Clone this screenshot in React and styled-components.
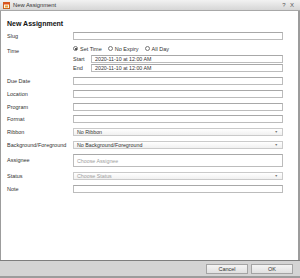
import React from "react"
import styled, { createGlobalStyle } from "styled-components"

const GlobalStyle = createGlobalStyle`
  html, body {
    margin: 0;
    padding: 0;
    width: 300px;
    height: 278px;
    overflow: hidden;
    background: #ffffff;
    font-family: "Liberation Sans", Arial, sans-serif;
  }
`

const Window = styled.div`
  width: 300px;
  height: 278px;
  box-sizing: border-box;
  display: flex;
  flex-direction: column;
  background: #9c9c9c;
  padding: 0 2px 2px 1px;
`

const TitleBar = styled.div`
  height: 10px;
  margin: 0 -2px 0 -1px;
  display: flex;
  align-items: center;
  padding: 0 4px 0 3px;
  background: linear-gradient(#f2f2f2, #d6d6d6);
  border-bottom: 1px solid #a8a8a8;
  font-size: 5.8px;
  color: #333;
`

const TitleText = styled.span`
  margin-left: 3px;
  flex: 1;
`

const TitleButton = styled.span`
  width: 8px;
  text-align: center;
  font-size: 6px;
  color: #555;
`

const Body = styled.div`
  flex: 1;
  background: #ffffff;
  padding: 8px 15px 0 6px;
  display: flex;
  flex-direction: column;
`

const Heading = styled.div`
  font-size: 7px;
  font-weight: bold;
  color: #111;
  height: 10px;
  line-height: 10px;
  margin-bottom: 3px;
`

const Form = styled.div`
  display: grid;
  grid-template-columns: 66px 1fr;
  row-gap: 4.9px;
  align-items: center;
`

const Label = styled.div`
  font-size: 5.5px;
  color: #333;
  align-self: ${(p) => (p.top ? "start" : "center")};
  padding-top: ${(p) => (p.top ? "3px" : "0")};
`

const Input = styled.div`
  height: ${(p) => p.h || 8}px;
  box-sizing: border-box;
  border: 1px solid #bcbcbc;
  border-top-color: #a8a8a8;
  background: #fff;
  font-size: 5.3px;
  color: ${(p) => (p.muted ? "#a0a0a0" : "#333")};
  padding: 0 3px;
  display: flex;
  align-items: center;
  flex: 1;
`

const Select = styled(Input)`
  background: linear-gradient(#ffffff, #f0f0f0);
  justify-content: space-between;
  border-color: #cacaca;
`

const Arrow = styled.span`
  font-size: 3.5px;
  color: #777;
  margin-right: 1px;
`

const TimeBlock = styled.div`
  display: flex;
  flex-direction: column;
  gap: 1px;
`

const RadioRow = styled.div`
  display: flex;
  align-items: center;
  gap: 6px;
  height: 8px;
  margin-bottom: 1px;
`

const RadioOption = styled.label`
  display: flex;
  align-items: center;
  gap: 2px;
  font-size: 5.5px;
  color: #333;
`

const RadioDot = styled.span`
  width: 5px;
  height: 5px;
  box-sizing: border-box;
  border-radius: 50%;
  border: 1px solid #777;
  background: #fff;
  display: flex;
  align-items: center;
  justify-content: center;

  &::after {
    content: "";
    width: 2px;
    height: 2px;
    border-radius: 50%;
    background: ${(p) => (p.checked ? "#222" : "transparent")};
  }
`

const SubRow = styled.div`
  display: flex;
  align-items: center;
`

const SubLabel = styled.span`
  width: 18px;
  font-size: 5.5px;
  color: #333;
`

const Footer = styled.div`
  height: 15px;
  margin-left: -1px;
  margin-right: -2px;
  padding: 0 7px 0 0;
  background: #d4d4d4;
  border-top: 1px solid #7e7e7e;
  display: flex;
  justify-content: flex-end;
  align-items: center;
  gap: 3px;
`

const Button = styled.div`
  width: 42px;
  height: 10px;
  box-sizing: border-box;
  border: 1px solid #a4a4a4;
  background: linear-gradient(#f4f4f4, #e0e0e0);
  font-size: 5.5px;
  color: #333;
  display: flex;
  align-items: center;
  justify-content: center;
`

const AppIcon = () => (
  <svg width="7" height="7" viewBox="0 0 7 7">
    <rect x="0.5" y="0.5" width="6" height="6" fill="#fff7e6" stroke="#c8641e" />
    <rect x="0.5" y="0.5" width="6" height="2" fill="#e0501e" />
    <rect x="2" y="3.5" width="3" height="2" fill="#e8a23a" />
  </svg>
)

const SelectField = ({ children, muted }) => (
  <Select muted={muted}>
    <span>{children}</span>
    <Arrow>▼</Arrow>
  </Select>
)

export default function App() {
  return (
    <>
      <GlobalStyle />
      <Window>
        <TitleBar>
          <AppIcon />
          <TitleText>New Assignment</TitleText>
          <TitleButton>?</TitleButton>
          <TitleButton>X</TitleButton>
        </TitleBar>
        <Body>
          <Heading>New Assignment</Heading>
          <Form>
            <Label>Slug</Label>
            <Input />

            <Label top>Time</Label>
            <TimeBlock>
              <RadioRow>
                <RadioOption><RadioDot checked />Set Time</RadioOption>
                <RadioOption><RadioDot />No Expiry</RadioOption>
                <RadioOption><RadioDot />All Day</RadioOption>
              </RadioRow>
              <SubRow>
                <SubLabel>Start</SubLabel>
                <Input>2020-11-10 at 12:00 AM</Input>
              </SubRow>
              <SubRow>
                <SubLabel>End</SubLabel>
                <Input>2020-11-10 at 12:00 AM</Input>
              </SubRow>
            </TimeBlock>

            <Label>Due Date</Label>
            <Input />
            <Label>Location</Label>
            <Input />
            <Label>Program</Label>
            <Input />
            <Label>Format</Label>
            <Input />
            <Label>Ribbon</Label>
            <SelectField>No Ribbon</SelectField>
            <Label>Background/Foreground</Label>
            <SelectField>No Background/Foreground</SelectField>
            <Label top>Assignee</Label>
            <Input h={13} muted>Choose Assignee</Input>
            <Label>Status</Label>
            <SelectField muted>Choose Status</SelectField>
            <Label>Note</Label>
            <Input />
          </Form>
        </Body>
        <Footer>
          <Button>Cancel</Button>
          <Button>OK</Button>
        </Footer>
      </Window>
    </>
  )
}
